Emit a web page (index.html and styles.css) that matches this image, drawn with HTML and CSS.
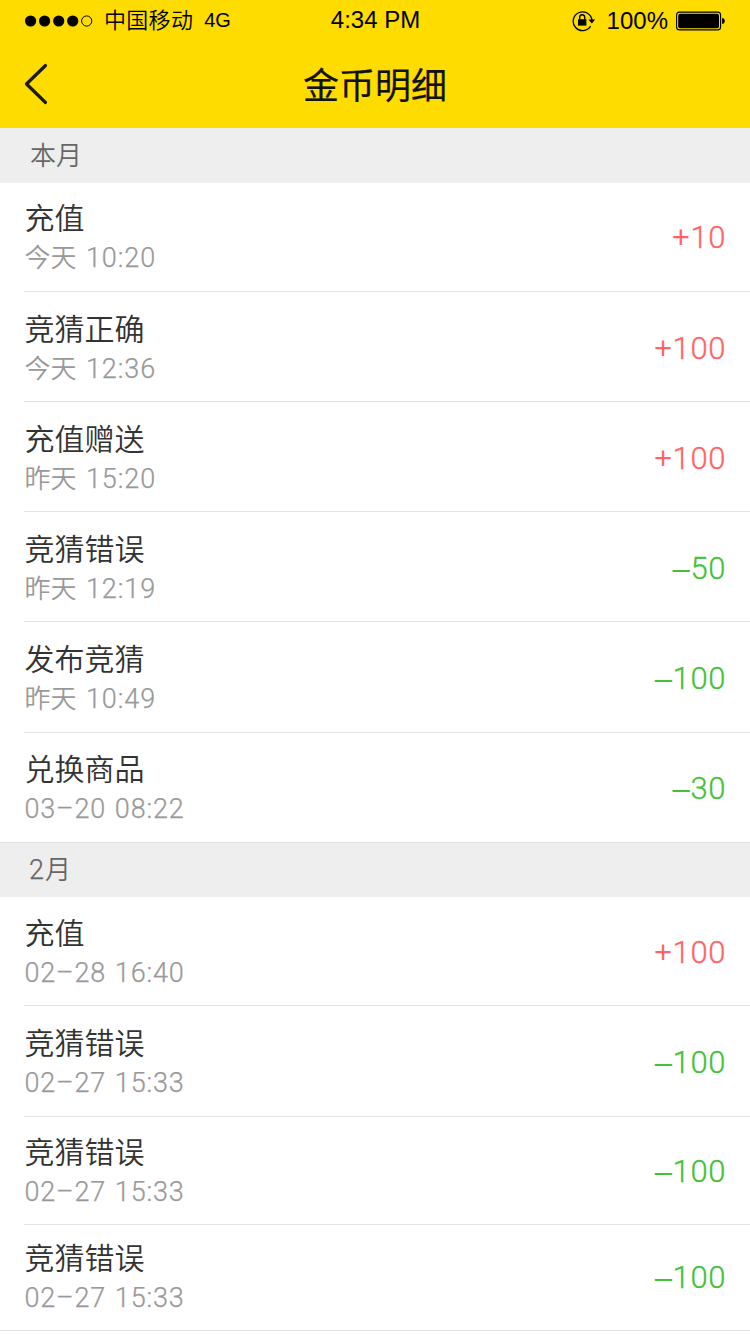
FILE: index.html
```html
<!DOCTYPE html>
<html lang="zh-CN">
<head>
<meta charset="utf-8">
<title>金币明细</title>
<link rel="stylesheet" href="styles.css">
</head>
<body>
<header class="top">
  <div class="status">
    <div class="status-left">
      <svg class="signal" width="68" height="12" viewBox="0 0 68 12"><circle cx="5.6" cy="6" r="5.6"/><circle cx="19.6" cy="6" r="5.6"/><circle cx="33.7" cy="6" r="5.6"/><circle cx="47.7" cy="6" r="5.6"/><circle cx="61.7" cy="6" r="5.1" fill="none" stroke="#000"/></svg>
      <span class="carrier">中国移动</span>
      <span class="network">4G</span>
    </div>
    <span class="clock">4:34 PM</span>
    <div class="status-right">
      <svg class="lock" width="24" height="22" viewBox="0 0 24 22"><path d="M18.6 16.2A9.4 9.4 0 1 1 19.9 10" fill="none" stroke="#000" stroke-width="1.3"/><path d="M16.4 9.4h6.8l-3.4 4z"/><rect x="6" y="9.2" width="8.4" height="6.4"/><path d="M7.7 9.5V7.2a2.5 2.5 0 0 1 5 0v2.3" fill="none" stroke="#000" stroke-width="1.4"/></svg>
      <span class="percent">100%</span>
      <svg class="battery" width="49" height="20" viewBox="0 0 49 20"><rect x=".6" y="1.1" width="44" height="17.8" rx="3" fill="none" stroke="#000" stroke-width="1.1"/><rect x="2.2" y="2.7" width="40.8" height="14.6" rx="2"/><path d="M46.1 7c3.6.4 3.6 5.6 0 6z"/></svg>
    </div>
  </div>
  <nav class="nav">
    <svg class="back" width="24" height="42" viewBox="0 0 24 42"><path d="M21.5 2.5L2.5 21L21.5 39.5" fill="none" stroke="#1a1a12" stroke-width="3.2" stroke-linecap="round" stroke-linejoin="round"/></svg>
    <h1 class="title">金币明细</h1>
  </nav>
</header>
<main>
  <h2 class="month">本月</h2>
  <ul class="list">
    <li class="row row-first"><div class="info"><p class="name">充值</p><p class="time">今天<span class="digits"> 10:20</span></p></div><span class="amount gain"><span class="sign">+</span>10</span></li>
    <li class="row"><div class="info"><p class="name">竞猜正确</p><p class="time">今天<span class="digits"> 12:36</span></p></div><span class="amount gain"><span class="sign">+</span>100</span></li>
    <li class="row"><div class="info"><p class="name">充值赠送</p><p class="time">昨天<span class="digits"> 15:20</span></p></div><span class="amount gain"><span class="sign">+</span>100</span></li>
    <li class="row"><div class="info"><p class="name">竞猜错误</p><p class="time">昨天<span class="digits"> 12:19</span></p></div><span class="amount loss"><span class="sign">–</span>50</span></li>
    <li class="row row-tall"><div class="info"><p class="name">发布竞猜</p><p class="time">昨天<span class="digits"> 10:49</span></p></div><span class="amount loss"><span class="sign">–</span>100</span></li>
    <li class="row row-end"><div class="info"><p class="name">兑换商品</p><p class="time"><span class="digits date">03–20 08:22</span></p></div><span class="amount loss"><span class="sign">–</span>30</span></li>
  </ul>
  <h2 class="month month-ruled"><span class="digits">2</span>月</h2>
  <ul class="list">
    <li class="row row-opening"><div class="info"><p class="name">充值</p><p class="time"><span class="digits date">02–28 16:40</span></p></div><span class="amount gain"><span class="sign">+</span>100</span></li>
    <li class="row row-tall"><div class="info"><p class="name">竞猜错误</p><p class="time"><span class="digits date">02–27 15:33</span></p></div><span class="amount loss"><span class="sign">–</span>100</span></li>
    <li class="row row-short"><div class="info"><p class="name">竞猜错误</p><p class="time"><span class="digits date">02–27 15:33</span></p></div><span class="amount loss"><span class="sign">–</span>100</span></li>
    <li class="row row-last"><div class="info"><p class="name">竞猜错误</p><p class="time"><span class="digits date">02–27 15:33</span></p></div><span class="amount loss"><span class="sign">–</span>100</span></li>
  </ul>
</main>
</body>
</html>
```
FILE: styles.css
```css
* { box-sizing: border-box; margin: 0; padding: 0; }
body {
  width: 750px;
  height: 1334px;
  overflow: hidden;
  background: #fff;
  color: #333;
  font-family: "Liberation Sans", "Noto Sans CJK SC", sans-serif;
}
svg { display: block; flex: none; }
.top { height: 128px; background: #ffdc00; color: #000; }
.status {
  display: grid;
  grid-template-columns: 1fr auto 1fr;
  align-items: center;
  height: 40px;
  padding: 0 25px;
  white-space: nowrap;
}
.status-left, .status-right { display: flex; align-items: center; }
.status-right { justify-content: flex-end; }
.carrier { margin: -5px 0 0 11px; font: 350 22px/40px "Noto Sans CJK SC", sans-serif; letter-spacing: .3px; }
.network { margin: -1px 0 0 11px; font-size: 20px; line-height: 40px; }
.clock { margin: -2px 0 0 1px; font-size: 24px; line-height: 40px; }
.percent { margin: 1px 8px 0 11px; font-size: 24px; line-height: 40px; }
.nav {
  display: grid;
  grid-template-columns: 24px 1fr 24px;
  align-items: center;
  height: 88px;
  padding: 0 24px;
}
.title {
  margin-top: -2px;
  text-align: center;
  font: 400 36px/88px "Noto Sans CJK SC", sans-serif;
  color: #111;
  -webkit-text-stroke: .2px #111;
}
.month {
  height: 55px;
  padding-left: 30px;
  background: #eee;
  color: #666;
  font: 350 26px/52px "Noto Sans CJK SC", sans-serif;
}
.month-ruled { padding-left: 29px; border-top: 1px solid #e1e1e1; line-height: 50px; }
.list { list-style: none; }
.row {
  display: flex;
  justify-content: space-between;
  height: 110px;
  margin-left: 24px;
  padding: 15px 24px 0 0;
  border-bottom: 1px solid #e3e3e3;
}
.row-first { height: 109px; padding-top: 13px; }
.row-tall { height: 111px; }
.row-end { height: 109px; padding-top: 14px; border-bottom: 0; }
.row-opening { height: 109px; padding-top: 14px; }
.row-short { height: 108px; padding-top: 13px; }
.row-last { height: 106px; margin-left: 0; padding: 11px 24px 0 24px; }
.name { padding-left: .5px; font: 350 30px/40px "Noto Sans CJK SC", sans-serif; }
.time {
  height: 40px;
  padding-left: .5px;
  color: #999;
  font: 350 26px/40px "Noto Sans CJK SC", sans-serif;
}
.digits {
  font: 300 27px/1 Roboto, sans-serif;
  letter-spacing: .9px;
  word-spacing: 2px;
  -webkit-text-stroke: .25px currentColor;
}
.date { letter-spacing: .8px; word-spacing: 1.5px; }
.amount {
  margin-top: 22px;
  font: 300 31px/40px Roboto, sans-serif;
  letter-spacing: .6px;
  -webkit-text-stroke: .3px currentColor;
}
.sign {
  font-family: "Liberation Sans", sans-serif;
  line-height: 1;
  -webkit-text-stroke: 0;
}
.gain { color: #ff6464; }
.loss { color: #43c138; }
```
